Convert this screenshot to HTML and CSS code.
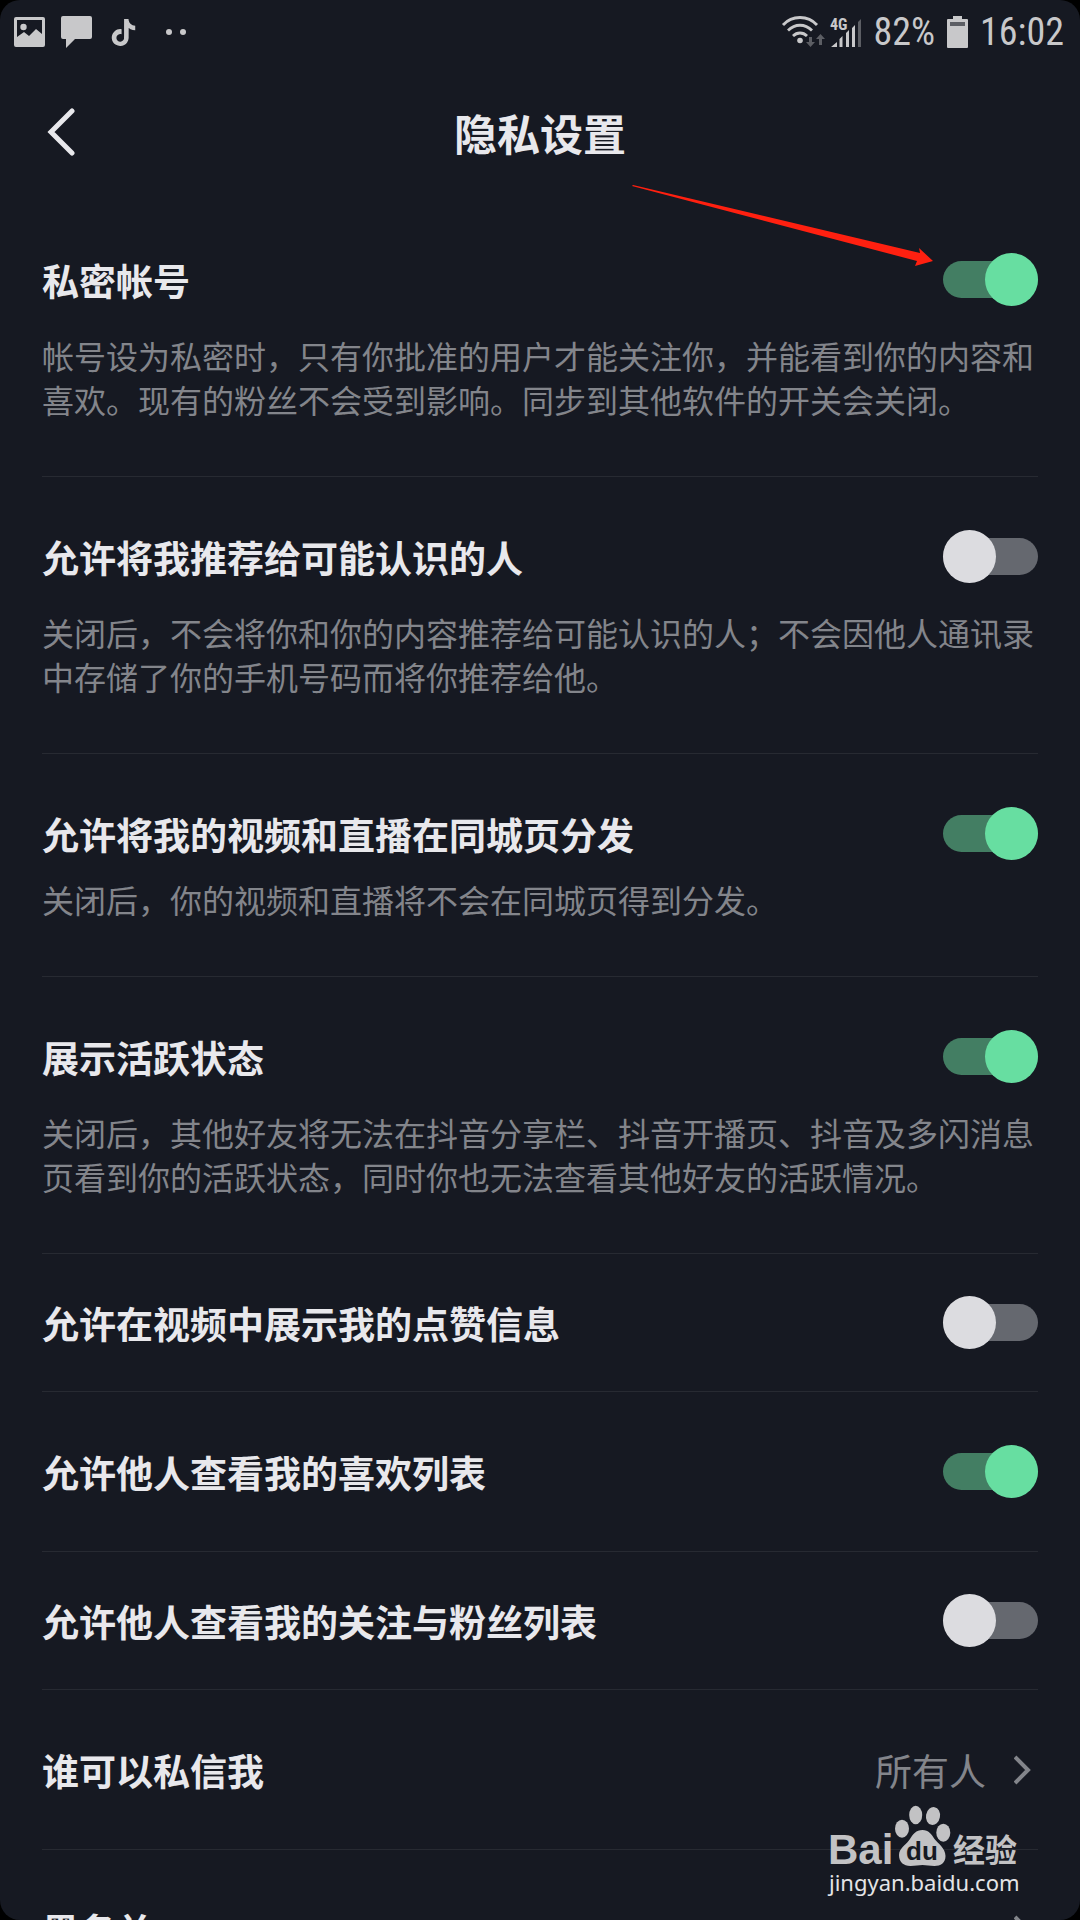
FILE: index.html
```
<!DOCTYPE html>
<html lang="zh-CN">
<head>
    <meta charset="UTF-8">
    <meta name="viewport" content="width=device-width, initial-scale=1.0">
    <title>隐私设置</title>
    <link rel="stylesheet" href="styles.css">
</head>
<body>
    <div class="screen">
        <div class="status-bar">
            <div class="status-left">
                <svg width="31" height="30" viewBox="0 0 31 30">
                    <path fill-rule="evenodd" d="M2 0h27a2 2 0 0 1 2 2v26a2 2 0 0 1-2 2H2a2 2 0 0 1-2-2V2a2 2 0 0 1 2-2zM3 3v17l7-5 5 4 7-7 6 5V3z"/>
                    <circle cx="9.500" cy="10" r="3.200"/>
                </svg>
                <svg width="31" height="32" viewBox="0 0 31 32">
                    <path d="M2 0h27a2 2 0 0 1 2 2v19a2 2 0 0 1-2 2H14l-9 9v-9H2a2 2 0 0 1-2-2V2a2 2 0 0 1 2-2z"/>
                </svg>
                <svg class="icon-note" width="27" height="27" viewBox="0 0 24 24">
                    <path d="M12.525.02c1.31-.02 2.61-.01 3.91-.02.08 1.53.63 3.09 1.75 4.17 1.12 1.11 2.7 1.62 4.24 1.79v4.03c-1.44-.05-2.89-.35-4.2-.97-.57-.26-1.1-.59-1.62-.93-.01 2.92.01 5.84-.02 8.75-.08 1.4-.54 2.79-1.35 3.94-1.31 1.92-3.58 3.17-5.91 3.21-1.43.08-2.86-.31-4.08-1.03-2.02-1.19-3.44-3.37-3.65-5.71-.02-.5-.03-1-.01-1.49.18-1.9 1.12-3.72 2.58-4.96 1.66-1.44 3.98-2.13 6.15-1.72.02 1.48-.04 2.96-.04 4.44-.99-.32-2.15-.23-3.02.37-.63.41-1.11 1.04-1.36 1.75-.21.51-.15 1.07-.14 1.61.24 1.64 1.82 3.02 3.5 2.87 1.12-.01 2.19-.66 2.77-1.61.19-.33.4-.67.41-1.06.1-1.79.06-3.57.07-5.36.01-4.03-.01-8.05.02-12.07z"/>
                </svg>
                <svg class="icon-dots" width="22" height="8" viewBox="0 0 22 8">
                    <circle cx="4" cy="4" r="3"/>
                    <circle cx="18" cy="4" r="3"/>
                </svg>
            </div>
            <div class="status-right">
                <svg width="42" height="32" viewBox="0 0 42 32">
                    <g fill="none" stroke="#c8c8ca" stroke-width="2.800">
                        <path d="M1 9C10-1 26-1 35 9"/>
                        <path d="M6 14.500c7-7 17-7 24 0"/>
                        <path d="M11 20c4-4 10-4 14 0"/>
                    </g>
                    <circle cx="18" cy="24.500" r="2.800"/>
                    <path fill="#5c5e64" d="M27 21h3v5h3l-4.500 5-4.500-5h3zM37 29h3v-6h3l-4.500-5-4.500 5h3z"/>
                </svg>
                <svg class="icon-signal" width="32" height="32" viewBox="0 0 32 32">
                    <text class="network" x="0" y="14">4G</text>
                    <path d="M1 31l6-5v5zM9.500 23l3-3v11h-3zM16 17l3-3v17h-3zM22 12l3-3v22h-3z"/>
                    <path fill="#5c5e64" d="M28 6l3-3v28h-3z"/>
                </svg>
                <span>82%</span>
                <svg class="icon-battery" width="21" height="32" viewBox="0 0 21 32">
                    <path d="M6 0h9v3h5a1 1 0 0 1 1 1v27a1 1 0 0 1-1 1H1a1 1 0 0 1-1-1V4a1 1 0 0 1 1-1h5z"/>
                    <path fill="#5c5e64" d="M3 6h15v4H3z"/>
                </svg>
                <span>16:02</span>
            </div>
        </div>

        <header class="header">
            <button class="back" type="button" aria-label="返回">
                <svg width="28" height="50" viewBox="0 0 28 50">
                    <path d="M25 4L4 25l21 21"/>
                </svg>
            </button>
            <h1>隐私设置</h1>
        </header>

        <main class="settings">
            <div class="item">
                <div class="row">
                    <label for="private">私密帐号</label>
                    <input class="toggle" type="checkbox" id="private" checked>
                </div>
                <p>帐号设为私密时，只有你批准的用户才能关注你，并能看到你的内容和喜欢。现有的粉丝不会受到影响。同步到其他软件的开关会关闭。</p>
            </div>
            <div class="item">
                <div class="row">
                    <label for="recommend">允许将我推荐给可能认识的人</label>
                    <input class="toggle" type="checkbox" id="recommend">
                </div>
                <p>关闭后，不会将你和你的内容推荐给可能认识的人；不会因他人通讯录中存储了你的手机号码而将你推荐给他。</p>
            </div>
            <div class="item">
                <div class="row">
                    <label for="city">允许将我的视频和直播在同城页分发</label>
                    <input class="toggle" type="checkbox" id="city" checked>
                </div>
                <p class="short">关闭后，你的视频和直播将不会在同城页得到分发。</p>
            </div>
            <div class="item">
                <div class="row">
                    <label for="active">展示活跃状态</label>
                    <input class="toggle" type="checkbox" id="active" checked>
                </div>
                <p>关闭后，其他好友将无法在抖音分享栏、抖音开播页、抖音及多闪消息页看到你的活跃状态，同时你也无法查看其他好友的活跃情况。</p>
            </div>
            <div class="item compact">
                <div class="row">
                    <label for="likes-info">允许在视频中展示我的点赞信息</label>
                    <input class="toggle" type="checkbox" id="likes-info">
                </div>
            </div>
            <div class="item">
                <div class="row">
                    <label for="likes-list">允许他人查看我的喜欢列表</label>
                    <input class="toggle" type="checkbox" id="likes-list" checked>
                </div>
            </div>
            <div class="item compact">
                <div class="row">
                    <label for="follow-list">允许他人查看我的关注与粉丝列表</label>
                    <input class="toggle" type="checkbox" id="follow-list">
                </div>
            </div>
            <div class="item">
                <a class="row" href="#">
                    <span>谁可以私信我</span>
                    <span class="value">所有人
                        <svg class="chevron" width="24" height="32" viewBox="0 0 24 32"><path d="M1 3l13 13L1 29"/></svg>
                    </span>
                </a>
            </div>
            <div class="item">
                <a class="row" href="#">
                    <span>黑名单</span>
                    <span class="value">
                        <svg class="chevron" width="24" height="32" viewBox="0 0 24 32"><path d="M1 3l13 13L1 29"/></svg>
                    </span>
                </a>
            </div>
        </main>

        <svg class="arrow" width="301" height="83" viewBox="0 0 301 83">
            <path d="M1 0L288 68l-1-5 14 13-18 5 2-5L0 1z"/>
        </svg>

        <svg class="watermark" width="210" height="100" viewBox="0 0 210 100">
            <text class="wm-bai" x="8" y="64">Bai</text>
            <ellipse cx="82" cy="28.700" rx="7" ry="9"/>
            <ellipse cx="95.700" cy="15" rx="6.500" ry="9.300"/>
            <ellipse cx="113" cy="16" rx="7" ry="9" transform="rotate(10 113 16)"/>
            <ellipse cx="123.300" cy="32.700" rx="7" ry="9"/>
            <path d="M102.500 30c6 0 9 4 12 9 3 4 11 9 11 17 0 7-5 10-11 10-5 0-8-1-12-1s-7 1-12 1c-7 0-11.500-4-11.500-11 0-7 8-11 11-16s6-9 12.500-9z"/>
            <text class="wm-du" x="102" y="60">du</text>
            <text class="wm-cn" x="133" y="62">经验</text>
            <text class="wm-url" x="9" y="91">jingyan.baidu.com</text>
        </svg>
    </div>
</body>
</html>
```
FILE: styles.css
```
* {
    box-sizing: border-box;
}
body {
    margin: 0;
    background: #000;
    font-family: "Noto Sans CJK SC", sans-serif;
    color: #e8e8ec;
}
.screen {
    position: relative;
    height: 100vh;
    overflow: hidden;
    border-radius: 20px;
    background: #161922;
}

/* status bar */
.status-bar {
    display: flex;
    justify-content: space-between;
    align-items: center;
    height: 64px;
    padding: 0 16px 0 14px;
    color: #c8c8ca;
    font-family: "Roboto Condensed", Roboto, sans-serif;
    font-size: 38px;
}
.status-bar svg {
    fill: #c8c8ca;
    overflow: visible;
}
.status-left,
.status-right {
    display: flex;
    align-items: center;
}
.status-left {
    gap: 16px;
}
.icon-note {
    margin-left: 2px;
}
.icon-dots {
    margin-left: 12px;
}
.status-right {
    gap: 12px;
}
.icon-signal {
    margin-left: -6px;
}
.network {
    font-size: 16px;
    font-weight: 700;
}

/* header */
.header {
    display: grid;
    grid-template-columns: 80px 1fr 80px;
    align-items: center;
    height: 136px;
    padding: 0 20px;
}
.back {
    display: flex;
    padding: 0 0 0 27px;
    border: none;
    background: none;
    cursor: pointer;
}
.back path {
    fill: none;
    stroke: #e8e8ec;
    stroke-width: 5;
    stroke-linecap: round;
}
h1 {
    margin: 0;
    font-size: 43px;
    font-weight: 700;
    line-height: 64px;
    text-align: center;
}

/* settings list */
.settings {
    padding: 0 42px;
}
.item {
    padding: 53px 0;
    border-bottom: 1px solid #272a32;
}
.compact {
    padding: 42px 0;
}
.row {
    display: flex;
    justify-content: space-between;
    align-items: center;
    height: 53px;
    color: inherit;
    font-size: 37px;
    font-weight: 700;
    text-decoration: none;
}
.item p {
    margin: 27px 0 2px;
    color: #83858b;
    font-size: 32px;
    line-height: 44px;
}
.item .short {
    margin-top: 17px;
}
.value {
    display: flex;
    align-items: center;
    gap: 28px;
    color: #83858b;
    font-weight: 400;
}
.chevron {
    fill: none;
    stroke: #83858b;
    stroke-width: 4;
}

/* toggle: track and knob share one grid cell */
.toggle {
    appearance: none;
    display: grid;
    align-items: center;
    width: 95px;
    height: 53px;
    margin: 0;
    cursor: pointer;
}
.toggle::before,
.toggle::after {
    content: "";
    grid-area: 1 / 1;
}
.toggle::before {
    height: 37px;
    border-radius: 19px;
    background: #65686f;
}
.toggle::after {
    width: 53px;
    height: 53px;
    border-radius: 50%;
    background: #dcdce0;
}
.toggle:checked::before {
    background: #437e63;
}
.toggle:checked::after {
    justify-self: end;
    background: #67dea1;
}

/* overlays */
.arrow {
    position: absolute;
    top: 185px;
    right: 147px;
    fill: #ff2010;
}
.watermark {
    position: absolute;
    right: 50px;
    bottom: 20px;
    fill: #c2c2c4;
}
.wm-bai {
    font: 700 42px "Liberation Sans", sans-serif;
}
.wm-du {
    fill: #161922;
    font: 700 26px "Liberation Sans", sans-serif;
    text-anchor: middle;
}
.wm-cn {
    font-size: 32px;
    font-weight: 700;
}
.wm-url {
    fill: #e4e4e6;
    font: 22px "Noto Sans", sans-serif;
}
```
